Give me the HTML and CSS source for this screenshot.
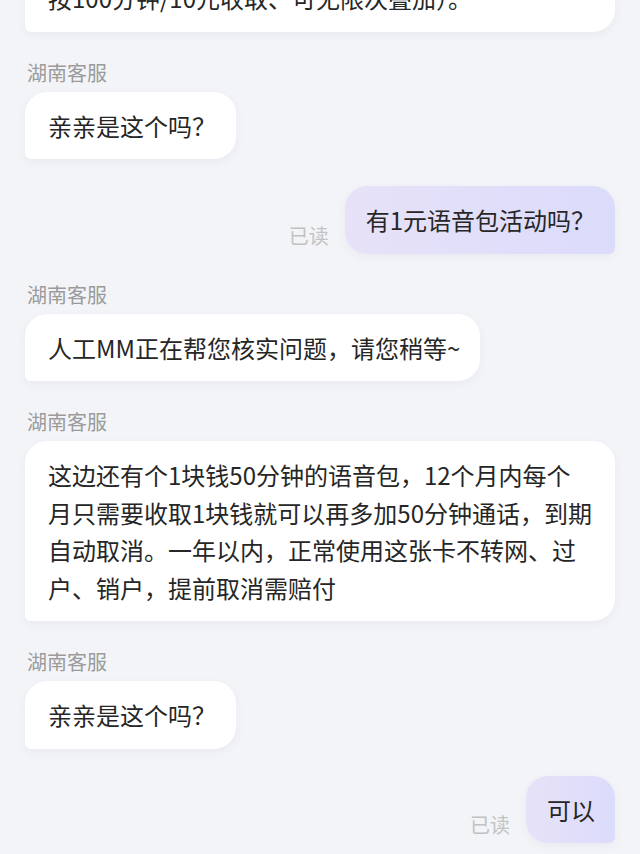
FILE: index.html
```html
<!DOCTYPE html>
<html lang="zh-CN">
<head>
<meta charset="utf-8">
<link rel="stylesheet" href="styles.css">
</head>
<body>
<div class="chat">
  <div class="msg left first">
    <div class="bubble bubble-in bubble-wide">按100分钟/10元收取、可无限次叠加）。</div>
  </div>
  <div class="msg left">
    <div class="name">湖南客服</div>
    <div class="bubble bubble-in">亲亲是这个吗？</div>
  </div>
  <div class="msg right">
    <span class="read">已读</span>
    <div class="bubble bubble-out">有1元语音包活动吗？</div>
  </div>
  <div class="msg left">
    <div class="name">湖南客服</div>
    <div class="bubble bubble-in">人工MM正在帮您核实问题，请您稍等~</div>
  </div>
  <div class="msg left">
    <div class="name">湖南客服</div>
    <div class="bubble bubble-in bubble-wide">这边还有个1块钱50分钟的语音包，12个月内每个<br>月只需要收取1块钱就可以再多加50分钟通话，到期<br>自动取消。一年以内，正常使用这张卡不转网、过<br>户、销户，提前取消需赔付</div>
  </div>
  <div class="msg left">
    <div class="name">湖南客服</div>
    <div class="bubble bubble-in">亲亲是这个吗？</div>
  </div>
  <div class="msg right">
    <span class="read">已读</span>
    <div class="bubble bubble-out">可以</div>
  </div>
</div>
</body>
</html>
```
FILE: styles.css
```css
html, body {
  margin: 0;
  padding: 0;
}
body {
  width: 640px;
  height: 854px;
  overflow: hidden;
  background: #f3f4f8;
  font-family: "Noto Sans CJK SC", "Noto Sans", sans-serif;
  color: #262626;
}
.chat {
  display: flex;
  flex-direction: column;
  padding: 0 25px;
  margin-top: -36px;
}
.msg {
  margin-top: 27px;
  display: flex;
}
.msg.first {
  margin-top: 0;
}
.msg.left {
  flex-direction: column;
  align-items: flex-start;
}
.msg.right {
  flex-direction: row;
  justify-content: flex-end;
  align-items: flex-end;
  gap: 16px;
}
.name {
  font-size: 20px;
  line-height: 28px;
  color: #9b9b9b;
  padding-left: 2px;
  margin-bottom: 5px;
}
.bubble {
  box-sizing: border-box;
  font-size: 24px;
  line-height: 37.5px;
  padding: 15px 20px 15px 23px;
  box-shadow: 0 3px 10px rgba(60, 60, 90, 0.05);
}
.bubble-in {
  background: #ffffff;
  border-radius: 22px 22px 22px 6px;
  max-width: 590px;
}
.bubble-wide {
  align-self: stretch;
  padding-right: 12px;
}
.bubble-out {
  background: linear-gradient(90deg, #e7e2f8 0%, #dbdbfb 100%);
  border-radius: 22px 22px 6px 22px;
  padding: 15px 20px 15px 21px;
}
.read {
  font-size: 20px;
  line-height: 28px;
  color: #c2c2c2;
  margin-bottom: 4px;
}
```
